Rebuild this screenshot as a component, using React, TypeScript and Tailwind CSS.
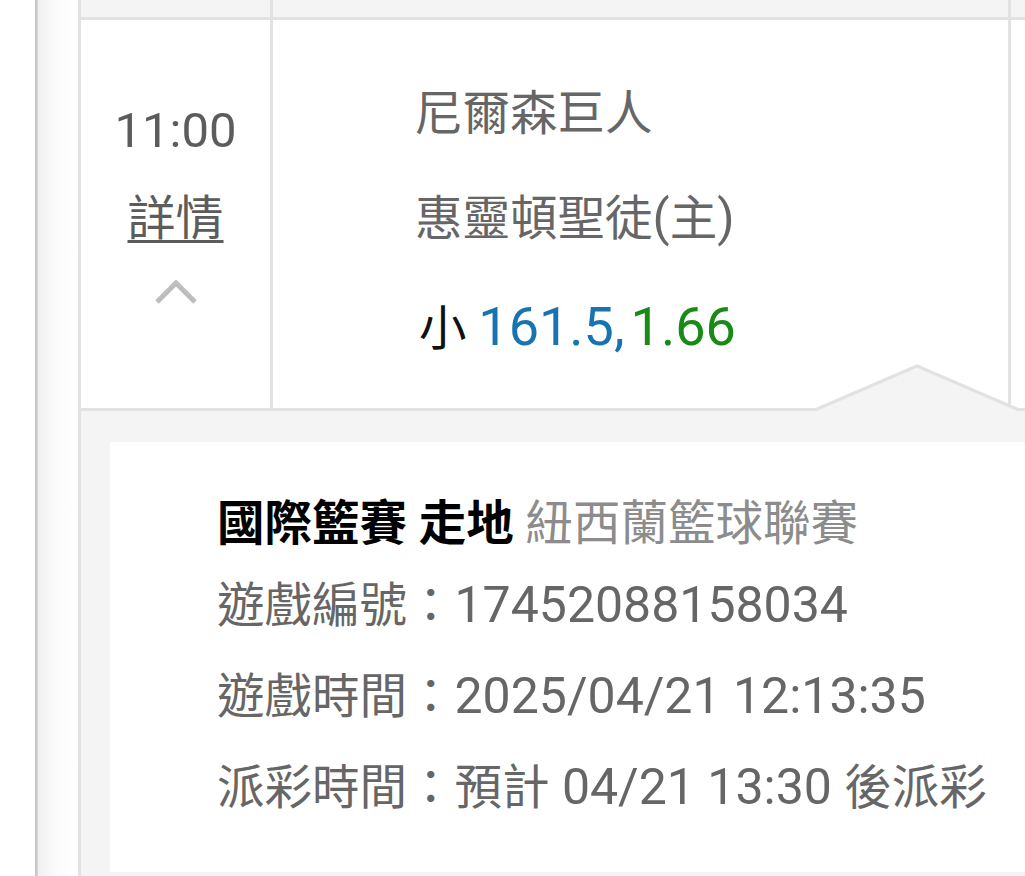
const App = () => {
  return (
    <div className="flex h-[876px] w-full overflow-hidden bg-white font-[Roboto,'Noto_Sans_CJK_TC',sans-serif]">
      {/* Page edge */}
      <div className="w-[35px] shrink-0 bg-white"></div>
      <div className="w-[3px] shrink-0 bg-gradient-to-r from-[#c2c2c2] to-[#d6d6d6]"></div>
      <div className="w-[40px] shrink-0 bg-gradient-to-r from-[#f0f0f0] via-[#fcfcfc] to-white"></div>

      {/* Table */}
      <div className="flex min-w-0 flex-1 flex-col border-l-[3px] border-[#e2e2e2]">
        {/* Header remnant */}
        <div className="flex h-[20px] shrink-0 border-b-[3px] border-[#e2e2e2] bg-[#f4f4f4]">
          <div className="w-[192px] shrink-0 border-r-[3px] border-[#e2e2e2]"></div>
          <div className="w-[738px] shrink-0 border-r-[3px] border-[#e2e2e2]"></div>
          <div className="flex-1"></div>
        </div>

        {/* Match row */}
        <div className="relative flex h-[391px] shrink-0 border-b-[3px] border-[#e2e2e2]">
          <div className="flex w-[192px] shrink-0 flex-col items-center border-r-[3px] border-[#e2e2e2] pt-[81px] text-[#5c5c5c]">
            <div className="text-[49px] leading-[60px]">11:00</div>
            <div className="mt-[28px] text-[48px] leading-[60px] underline decoration-[3px] underline-offset-[5px]">
              詳情
            </div>
            <svg className="mt-[28px]" width="44" height="28" viewBox="0 0 44 28" fill="none">
              <polyline points="3,25 22,6 41,25" stroke="#bdbdbd" strokeWidth="5" />
            </svg>
          </div>

          <div className="flex w-[738px] shrink-0 flex-col border-r-[3px] border-[#e2e2e2] pl-[142px] pt-[42px] text-[47.5px] leading-[104px] text-[#666666]">
            <div>尼爾森巨人</div>
            <div>
              惠靈頓聖徒<span className="text-[50px]">(</span>主<span className="text-[50px]">)</span>
            </div>
            <div className="mt-[4px] pl-[4px]">
              <span className="text-[#111111]">小</span>{" "}
              <span className="text-[54px] text-[#1874b0]">161.5,</span>
              <span className="ml-[6px] text-[54px] text-[#178a17]">1.66</span>
            </div>
          </div>
          <div className="flex-1"></div>

          {/* Caret pointing at detail panel */}
          <svg
            className="absolute bottom-[-3px] left-[735px]"
            width="210"
            height="47"
            viewBox="0 0 210 47"
          >
            <polygon points="0,47 101,2 202,47" fill="#f4f4f4" />
            <polyline points="0,45.5 101,2 202,45.5" fill="none" stroke="#e2e2e2" strokeWidth="3" />
          </svg>
        </div>

        {/* Detail panel */}
        <div className="flex flex-1 flex-col bg-[#f4f4f4] pb-[4px] pl-[29px] pt-[31px]">
          <div className="flex-1 bg-white pl-[107px] pt-[37px] text-[47.5px] leading-[90px] text-[#666666]">
            <div className="mb-[-9px] whitespace-nowrap">
              <span className="font-bold text-black">國際籃賽 走地</span>{" "}
              <span className="text-[#8c8c8c]">紐西蘭籃球聯賽</span>
            </div>
            <div className="whitespace-nowrap">
              遊戲編號：<span className="text-[50px]">17452088158034</span>
            </div>
            <div className="whitespace-nowrap">
              遊戲時間：<span className="text-[50px]">2025/04/21 12:13:35</span>
            </div>
            <div className="whitespace-nowrap">
              派彩時間：預計<span className="text-[50px]"> 04/21 13:30 </span>後派彩
            </div>
          </div>
        </div>
      </div>
    </div>
  );
};

export default App;
